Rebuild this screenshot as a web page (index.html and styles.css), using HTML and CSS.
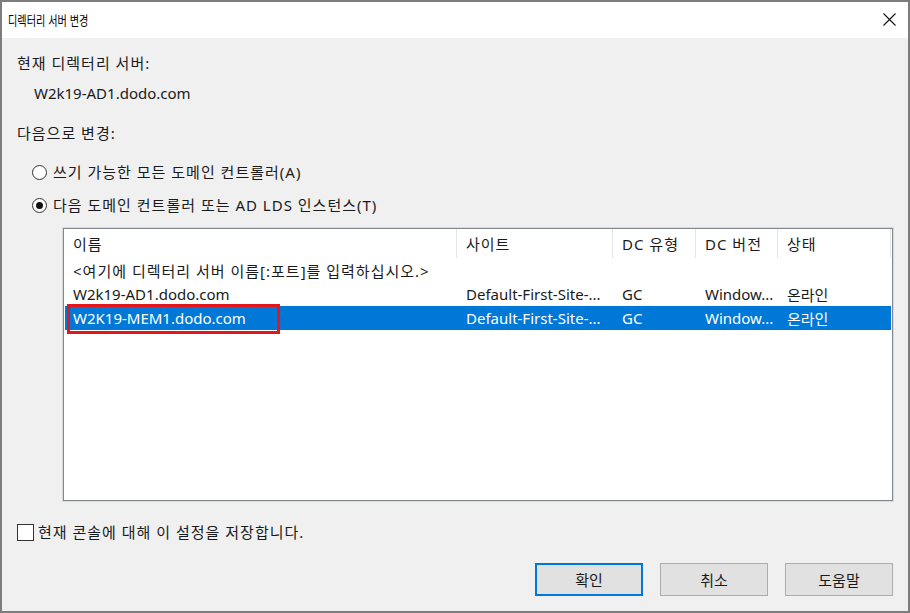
FILE: index.html
```html
<!DOCTYPE html>
<html lang="ko">

<head>
    <meta charset="UTF-8">
    <title>디렉터리 서버 변경</title>
    <link rel="stylesheet" href="styles.css">
</head>

<body>
    <div class="dialog">
        <div class="titlebar">
            <span class="title">디렉터리 서버 변경</span>
            <span class="close">
                <svg width="13" height="13" viewBox="0 0 13 13">
                    <path d="M0.5 0.5 L12.5 12.5 M12.5 0.5 L0.5 12.5" stroke="#111" stroke-width="1.1" fill="none" />
                </svg>
            </span>
        </div>

        <div class="content">
            <p class="label">현재 디렉터리 서버:</p>
            <p class="current">W2k19-AD1.dodo.com</p>
            <p class="label change">다음으로 변경:</p>

            <label class="radio first"><span class="dot"></span>쓰기 가능한 모든 도메인 컨트롤러(A)</label>
            <label class="radio checked"><span class="dot"></span>다음 도메인 컨트롤러 또는 AD LDS 인스턴스(T)</label>

            <div class="list">
                <div class="row head">
                    <span>이름</span>
                    <span>사이트</span>
                    <span>DC 유형</span>
                    <span>DC 버전</span>
                    <span>상태</span>
                </div>
                <div class="row">
                    <span class="wide">&lt;여기에 디렉터리 서버 이름[:포트]를 입력하십시오.&gt;</span>
                </div>
                <div class="row">
                    <span>W2k19-AD1.dodo.com</span>
                    <span>Default-First-Site-...</span>
                    <span>GC</span>
                    <span>Window...</span>
                    <span>온라인</span>
                </div>
                <div class="row selected">
                    <span class="marked">W2K19-MEM1.dodo.com</span>
                    <span>Default-First-Site-...</span>
                    <span>GC</span>
                    <span>Window...</span>
                    <span>온라인</span>
                </div>
            </div>

            <label class="check"><span class="box"></span>현재 콘솔에 대해 이 설정을 저장합니다.</label>

            <div class="buttons">
                <button class="btn default">확인</button>
                <button class="btn">취소</button>
                <button class="btn">도움말</button>
            </div>
        </div>
    </div>
</body>

</html>
```

FILE: styles.css
```css
*,
*::before,
*::after {
    margin: 0;
    padding: 0;
    box-sizing: border-box;
}

body {
    width: 910px;
    height: 613px;
    overflow: hidden;
    font-family: 'Noto Sans', 'Noto Sans CJK KR', sans-serif;
    font-size: 15px;
    color: #1a1a1a;
}

.dialog {
    width: 910px;
    height: 613px;
    border: 2px solid #7d7d7d;
    background-color: #f0f0f0;
    display: flex;
    flex-direction: column;
}

.titlebar {
    height: 36px;
    background-color: #ffffff;
    display: flex;
    justify-content: space-between;
    align-items: center;
    padding: 0 12px 2px 6px;
}

.title {
    display: inline-block;
    font-family: 'Noto Sans CJK KR', sans-serif;
    font-size: 13px;
    color: #000;
    transform: scaleX(0.78);
    transform-origin: left center;
}

.close {
    display: flex;
}

.content {
    padding: 15px 15px 0 15px;
    display: flex;
    flex-direction: column;
}

.label,
.current,
.radio,
.check {
    line-height: 20px;
    height: 20px;
}

/* hangul reads wider in the original font */
.label,
.radio,
.check,
.row .wide,
.row.head span {
    letter-spacing: 1px;
}

.current {
    margin: 10px 0 0 17px;
}

.change {
    margin-top: 20px;
}

.radio {
    display: flex;
    align-items: center;
    gap: 6px;
    margin-left: 15px;
    margin-top: 13px;
}

.radio.first {
    margin-top: 19px;
}

.dot {
    width: 15px;
    height: 15px;
    border: 1px solid #333;
    border-radius: 50%;
    background-color: #fff;
    display: flex;
    align-items: center;
    justify-content: center;
}

.radio.checked .dot::after {
    content: '';
    width: 7px;
    height: 7px;
    border-radius: 50%;
    background-color: #111;
}

.list {
    margin: 13px 0 0 46px;
    height: 273px;
    background-color: #fff;
    border: 1px solid #828790;
    box-shadow: 0 0 0 1px #dadada;
    padding-right: 1px;
}

.row {
    display: grid;
    grid-template-columns: 393px 156px 83px 82px 1fr;
    height: 24px;
    align-items: center;
    white-space: nowrap;
}

.row span {
    padding-left: 9px;
    overflow: hidden;
}

.row .wide {
    grid-column: 1 / 6;
    overflow: visible;
}

.row.head {
    height: 29px;
}

.row.head span {
    height: 100%;
    display: flex;
    align-items: center;
    border-right: 1px solid #e5e5e5;
}

.row.selected {
    background-color: #0078d7;
    color: #fff;
    margin-left: 1px;
}

.row.selected span {
    padding-left: 8px;
}

.row .marked {
    position: relative;
    overflow: visible;
    align-self: stretch;
    display: flex;
    align-items: center;
}

.marked::after {
    content: '';
    position: absolute;
    left: 2px;
    top: -2px;
    width: 213px;
    height: 30px;
    border: 3px solid #e3161b;
}

.check {
    display: flex;
    align-items: center;
    gap: 4px;
    margin-top: 21px;
}

.box {
    width: 17px;
    height: 17px;
    border: 1px solid #333;
    background-color: #fff;
}

.buttons {
    display: flex;
    justify-content: flex-end;
    gap: 17px;
    margin-top: 21px;
}

.btn {
    width: 108px;
    height: 33px;
    background-color: #e1e1e1;
    border: 1px solid #adadad;
    font-family: 'Noto Sans', 'Noto Sans CJK KR', sans-serif;
    font-size: 15px;
    color: #1a1a1a;
}

.btn.default {
    border: 2px solid #0078d7;
}
```
